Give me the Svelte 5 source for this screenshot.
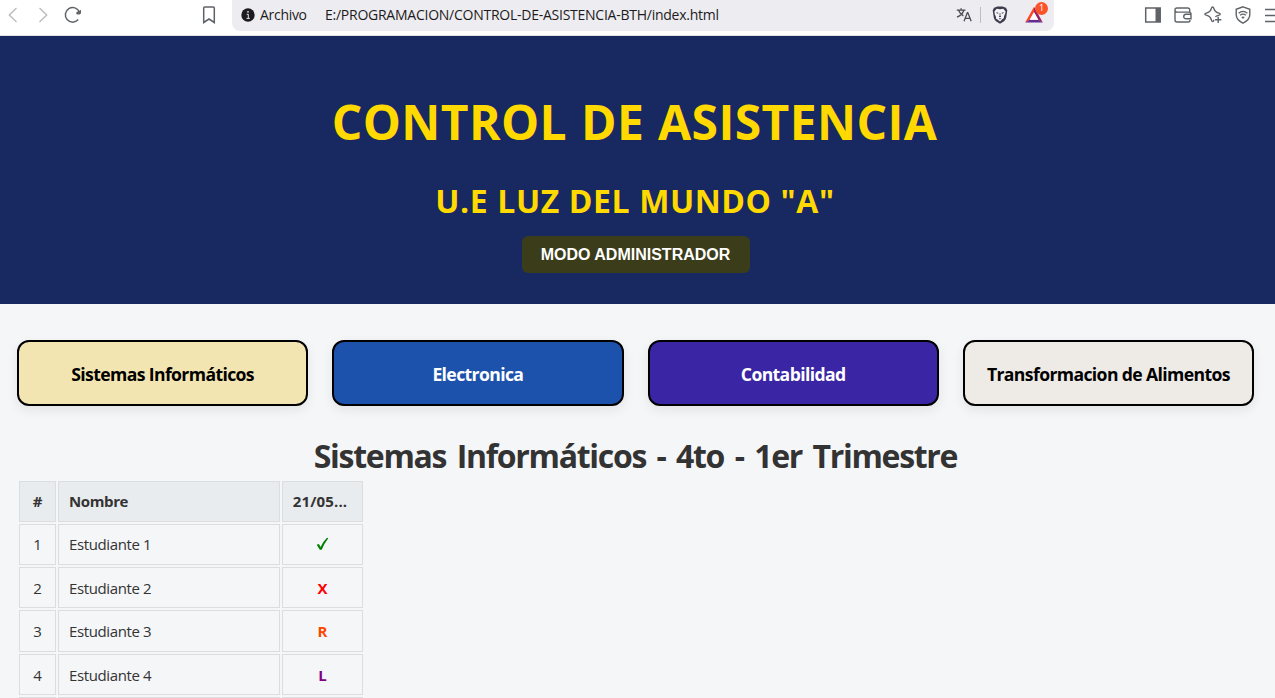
<script>
  const courses = [
    { name: 'Sistemas Informáticos', tone: 'sand' },
    { name: 'Electronica', tone: 'blue' },
    { name: 'Contabilidad', tone: 'violet' },
    { name: 'Transformacion de Alimentos', tone: 'stone' }
  ];
  const students = [
    { id: 1, name: 'Estudiante 1', mark: 'P' },
    { id: 2, name: 'Estudiante 2', mark: 'X' },
    { id: 3, name: 'Estudiante 3', mark: 'R' },
    { id: 4, name: 'Estudiante 4', mark: 'L' },
    { id: '', name: '', mark: '' }
  ];
</script>

<div class="window">
  <nav class="toolbar">
    <div class="nav-icons">
      <svg width="20" height="22" viewBox="0 0 20 22"><path d="M13.500 4 6.300 11l7.200 7" stroke="#bbbcbf" stroke-width="1.400" /></svg>
      <svg width="20" height="22" viewBox="0 0 20 22"><path d="m6.500 4 7.200 7-7.200 7" stroke="#bbbcbf" stroke-width="1.400" /></svg>
      <svg width="20" height="22" viewBox="0 0 20 22"><path d="M15.200 15.600A7.300 7.300 0 1 1 16.400 8" stroke="#5f6368" stroke-width="1.500" /><path d="M18 5.700v3.100q0 1.700-1.700 1.700h-1.500q-1.600 0-1.600-1.600t2.400-1.700Z" fill="#5f6368" /></svg>
    </div>
    <svg class="bookmark" width="20" height="22" viewBox="0 0 20 22"><path d="M4.700 3.900q0-1 1-1h8.600q1 0 1 1v14.600L10 15l-5.300 3.500Z" stroke="#5f6368" stroke-width="1.500" /></svg>

    <div class="address">
      <svg class="info" width="14" height="14" viewBox="0 0 14 14"><circle cx="7" cy="7" r="6.700" fill="#1d1b20" /><path d="M5.700 6.300H7.300v4M5.500 10.400h3.300" stroke="#e8e7ec" stroke-width="1" /><circle cx="7" cy="3.800" r=".9" fill="#e8e7ec" /></svg>
      <span class="scheme">Archivo</span>
      <span class="url">E:/PROGRAMACION/CONTROL-DE-ASISTENCIA-BTH/index.html</span>
      <svg class="translate" width="16" height="16" viewBox="0 0 16 16"><path d="M.8 3.200h8.700M5.100 1.200v2M7.800 3.300C6.900 6.400 4.500 8.700 1 10.200M2.700 3.400c1 2.600 2.800 4.400 4.700 5.500M8 14.300l3.400-8.700h.4l3.400 8.700M9.200 11.400h4.800" stroke="#4b4d53" stroke-width="1.300" /></svg>
      <i class="rule"></i>
      <svg class="lion" width="16" height="18" viewBox="0 0 16 18"><path d="m3.600 1.200 1.500-.7h5.800l1.500.7 1.600.5 1.300 2.900-1.100 7.200q-.5 2.200-2.500 3.600L8 17.700l-3.700-2.300q-2-1.400-2.500-3.600L.7 4.600 2 1.700Z" fill="#3d3c4d" /><path d="m4.700 2.700 3.300.6 3.300-.6 2.300 2.700-.4 2.200-1.200 2.600-.1 1.900-1.400.8L8 15.400l-2.500-1.800-1.400-.8-.1-1.900-1.200-2.600-.4-2.900Z" fill="#f4f3f8" /><path d="m4.200 6.300 2.200.5v.8l-1.500-.2ZM11.800 6.300l-2.200.5v.8l1.500-.2ZM7.700 7h.6l.1 2.800.9.700-1.300.8-1.300-.8.900-.7ZM6.600 12.800 8 12.200l1.400.6-1.400.8Z" fill="#3d3c4d" /></svg>
      <div class="rewards">
        <svg width="20" height="18" viewBox="0 0 20 18"><path d="M10 .8 1.200 16.600l4.500-2.700L10 6.200Z" fill="#ff4724" /><path d="m10 .8 8.800 15.800-4.500-2.700L10 6.200Z" fill="#9e1f63" /><path d="M1.200 16.600h17.600l-4.500-2.800H5.700Z" fill="#662d91" /><path d="m10 6 4.300 7.800H5.700Z" fill="#fff" /></svg>
        <span class="count">1</span>
      </div>
    </div>

    <div class="tools">
      <svg width="20" height="20" viewBox="0 0 20 20"><path d="M2.700 3h14.500v14H2.700Z" stroke="#5f6368" stroke-width="1.500" /><path d="M12.500 3h4.800v14h-4.800Z" fill="#5f6368" /></svg>
      <svg width="20" height="20" viewBox="0 0 20 20"><path d="M16.700 7.200V5q0-2-2-2H4Q2 3 2 5v10q0 2 2 2h11.200q1.800 0 1.800-2M2 5.500q.4 1.600 2 1.600h12q2 0 2 1.900v4.800h-5a2.300 2.300 0 0 1 0-4.600h5" stroke="#5f6368" stroke-width="1.400" /></svg>
      <svg width="20" height="20" viewBox="0 0 20 20"><path d="M11 14.700q-.5 1.900-1.400 1.900t-1.300-1.900q-.9-3.400-4.300-4.300Q1.800 9.900 1.800 9.200t2.200-1.300Q7.400 7 8.300 3.600 8.700 2 9.600 2t1.300 1.600q.9 3.400 4.300 4.300 2.100.6 2.100 1.300t-2 1.200q-2 .5-2.900 1.500M15.200 11.700v6.200M12.100 14.800h6.200" stroke="#5f6368" stroke-width="1.400" /></svg>
      <svg width="20" height="20" viewBox="0 0 20 20"><path d="m10 1.800 6.800 2.500v5.300q0 5.500-6.800 8.600-6.800-3.100-6.800-8.600V4.300Z" stroke="#5f6368" stroke-width="1.400" /><path d="M5.600 8.200q4.400-3.600 8.800 0M7.100 10.300q2.900-2.300 5.800 0" stroke="#5f6368" stroke-width="1.300" /><path d="m8.200 12.100q1.800-1.400 3.600 0L10 14Z" fill="#5f6368" /></svg>
      <svg class="menu" width="12" height="20" viewBox="0 0 12 20"><path d="M2 4.500h10M2 10.500h10M2 16.500h10" stroke="#5f6368" stroke-width="1.400" /></svg>
    </div>
  </nav>

  <header>
    <h1>CONTROL DE ASISTENCIA</h1>
    <h2>U.E LUZ DEL MUNDO "A"</h2>
    <button class="admin">MODO ADMINISTRADOR</button>
  </header>

  <main>
    <div class="courses">
      {#each courses as course}
        <button class="course {course.tone}"><span>{course.name}</span></button>
      {/each}
    </div>

    <h2 class="group">Sistemas Informáticos - 4to - 1er Trimestre</h2>

    <table>
      <thead>
        <tr><th class="num">#</th><th class="name">Nombre</th><th class="date">21/05...</th></tr>
      </thead>
      <tbody>
        {#each students as student}
          <tr>
            <td class="num">{student.id}</td>
            <td class="name">{student.name}</td>
            <td class="mark m{student.mark}">
              {#if student.mark === 'P'}
                <svg width="14" height="14" viewBox="0 0 14 14"><path d="M.7 7.800 2.900 7l1.700 3Q7.300 4.200 11 .8l1.300.4Q8.100 6.500 5.700 12.800H3.800Z" fill="#008000" /></svg>
              {:else}{student.mark}{/if}
            </td>
          </tr>
        {/each}
      </tbody>
    </table>
  </main>
</div>

<style>
  :global(body) { margin: 0; overflow: hidden; }
  .window {
    height: 698px;
    overflow: hidden;
    background: #f5f6f8;
    color: #333;
    font-family: 'Open Sans', 'Noto Sans', sans-serif;
  }
  svg { display: block; flex: none; fill: none; }
  .toolbar {
    display: flex;
    align-items: flex-start;
    box-sizing: border-box;
    height: 36px;
    padding-left: 3px;
    background: #fff;
    border-bottom: 1px solid #e2e2e8;
  }
  .nav-icons { display: flex; gap: 10px; padding-top: 4px; }
  .bookmark { margin: 4px 0 0 116px; }
  .address {
    display: flex;
    align-items: center;
    box-sizing: border-box;
    width: 822px;
    height: 31px;
    margin-left: 13px;
    padding-left: 9px;
    padding-bottom: 1px;
    background: #edecf1;
    border-radius: 0 0 8px 8px;
    color: #1d1b20;
    font-size: 14px;
    white-space: nowrap;
  }
  .scheme, .url { padding-bottom: 2px; }
  .scheme { width: 65px; margin-left: 5px; letter-spacing: -0.3px; }
  .url { width: 631px; letter-spacing: -0.25px; }
  .rule { width: 1px; height: 16px; margin: 0 11px 0 8px; background: #bdbdc4; }
  .rewards { position: relative; margin-left: 16px; }
  .count {
    position: absolute;
    top: -4px;
    left: 11px;
    width: 13px;
    height: 13px;
    border-radius: 7px;
    background: #fb542b;
    color: #fff;
    font-size: 9px;
    line-height: 12px;
    text-align: center;
  }
  .tools { display: flex; gap: 10px; padding: 5px 0 0 89px; }
  header {
    display: flex;
    flex-direction: column;
    align-items: center;
    box-sizing: border-box;
    height: 268px;
    padding: 54px 4px 0 0;
    background: #182861;
    color: #ffd900;
  }
  h1, h2 { margin: 0; font-weight: 700; white-space: nowrap; }
  h1 { padding-right: 2px; font-size: 48px; line-height: 64px; letter-spacing: 0.4px; word-spacing: 1px; }
  header h2 { margin-top: 25px; padding-right: 1px; font-size: 32px; line-height: 44px; letter-spacing: 0.6px; }
  .admin {
    width: 228px;
    height: 37px;
    margin-top: 13px;
    padding: 0;
    border: 0;
    border-radius: 6px;
    background: #3b3c1a;
    color: #fff;
    font: 700 16px 'Liberation Sans', Arial, sans-serif;
  }
  main { padding: 36px 21px 0 17px; }
  .courses { display: grid; grid-template-columns: repeat(4, 1fr); gap: 24px; }
  .course {
    height: 66px;
    padding: 1px 0 0;
    border: 2px solid #000;
    border-radius: 12px;
    box-shadow: 0 4px 12px rgba(0, 0, 0, 0.08);
    color: #000;
    font: 700 17.6px 'Open Sans', 'Noto Sans', sans-serif;
    white-space: nowrap;
    letter-spacing: -0.62px;
  }
  .sand { background: #f3e5b1; }
  .blue { background: #1d52ac; color: #fff; }
  .violet { background: #3a26a4; color: #fff; }
  .stone { background: #eeeae5; }
  .group {
    margin-top: 28px;
    font-size: 32px;
    line-height: 44px;
    letter-spacing: -1.3px;
    word-spacing: 3.500px;
    text-align: center;
  }
  table { width: 348px; margin-top: 1px; table-layout: fixed; border-spacing: 2px; font-size: 15px; }
  th, td {
    box-sizing: border-box;
    height: 41.150px;
    padding: 0 0 1px;
    border: 1px solid #dcdddf;
    line-height: 20px;
    text-align: center;
  }
  tr:nth-child(n + 2) td { padding: 1px 0 0; }
  th { background: #e8ecef; letter-spacing: -0.3px; }
  .num { width: 37px; }
  th.name, tr td.name { width: 222px; padding-left: 10px; text-align: left; letter-spacing: -0.38px; }
  tr:nth-child(n + 2) td.name { padding-left: 10px; }
  .date { width: 81px; letter-spacing: 0.15px; }
  th.date { padding-right: 5px; }
  .mark { font-weight: 700; }
  .mark svg { margin: 0 auto; }
  .mX { color: #f00; }
  .mR { color: #ff4500; }
  .mL { color: #800080; }
</style>
